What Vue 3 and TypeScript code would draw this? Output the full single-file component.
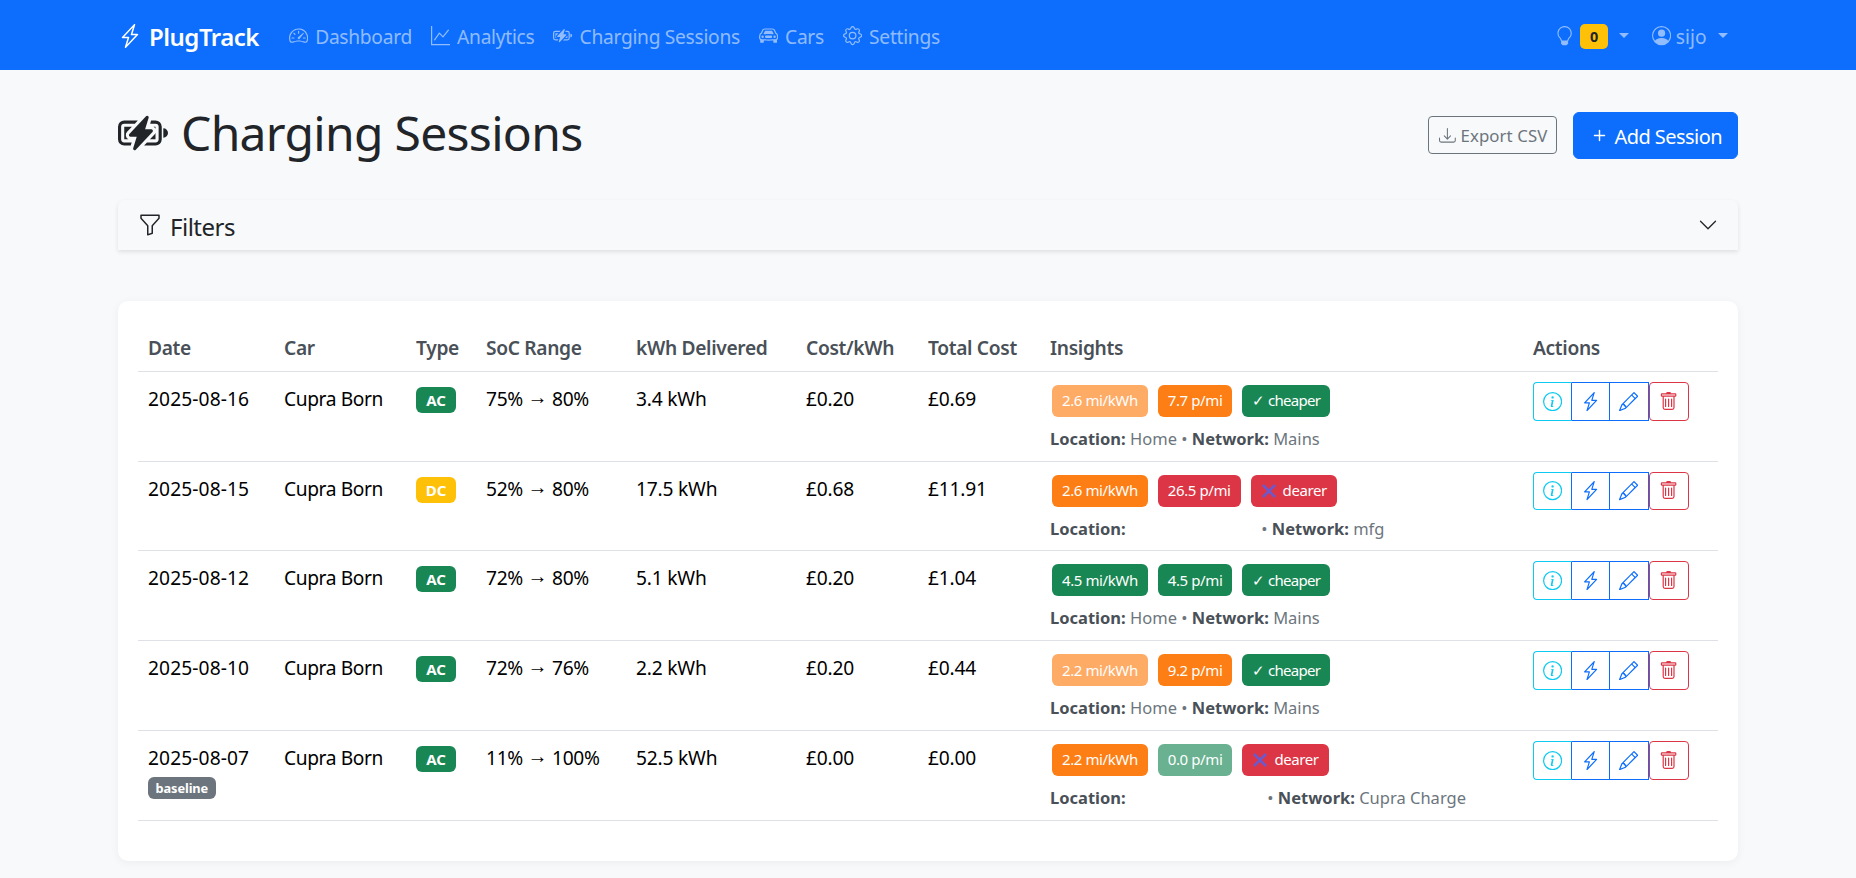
<script setup lang="ts">
interface Row {
  date: string; baseline?: boolean; type: string; socFrom: string; socTo: string; kwh: string; cost: string; total: string;
  eff: string; effClass: string; ppm: string; ppmClass: string; cheaper: boolean; location: string; network: string;
}
const rows: Row[] = [
  { date: '2025-08-16', type: 'AC', socFrom: '75%', socTo: '80%', kwh: '3.4 kWh', cost: '£0.20', total: '£0.69', eff: '2.6 mi/kWh', effClass: 'light-orange', ppm: '7.7 p/mi', ppmClass: 'orange', cheaper: true, location: 'Home', network: 'Mains' },
  { date: '2025-08-15', type: 'DC', socFrom: '52%', socTo: '80%', kwh: '17.5 kWh', cost: '£0.68', total: '£11.91', eff: '2.6 mi/kWh', effClass: 'orange', ppm: '26.5 p/mi', ppmClass: 'red', cheaper: false, location: '', network: 'mfg' },
  { date: '2025-08-12', type: 'AC', socFrom: '72%', socTo: '80%', kwh: '5.1 kWh', cost: '£0.20', total: '£1.04', eff: '4.5 mi/kWh', effClass: 'green', ppm: '4.5 p/mi', ppmClass: 'green', cheaper: true, location: 'Home', network: 'Mains' },
  { date: '2025-08-10', type: 'AC', socFrom: '72%', socTo: '76%', kwh: '2.2 kWh', cost: '£0.20', total: '£0.44', eff: '2.2 mi/kWh', effClass: 'light-orange', ppm: '9.2 p/mi', ppmClass: 'orange', cheaper: true, location: 'Home', network: 'Mains' },
  { date: '2025-08-07', baseline: true, type: 'AC', socFrom: '11%', socTo: '100%', kwh: '52.5 kWh', cost: '£0.00', total: '£0.00', eff: '2.2 mi/kWh', effClass: 'orange', ppm: '0.0 p/mi', ppmClass: 'light-green', cheaper: false, location: '', network: 'Cupra Charge' },
]
</script>

<template>
  <div class="page">
    <nav class="navbar">
      <div class="nav-inner">
        <a class="brand">
          <svg class="bi brand-icon" viewBox="0 0 16 16"><path d="M11.251.068a.5.5 0 0 1 .227.58L9.677 6.5H13a.5.5 0 0 1 .364.843l-8 8.5a.5.5 0 0 1-.842-.49L6.323 9.5H3a.5.5 0 0 1-.364-.843l8-8.5a.5.5 0 0 1 .615-.09zM4.157 8.5H7a.5.5 0 0 1 .478.647L6.11 13.59l5.732-6.09H9a.5.5 0 0 1-.478-.647L9.89 2.41 4.157 8.5z"/></svg>
          <span>PlugTrack</span>
        </a>
        <ul class="nav-links">
          <li><svg class="bi" viewBox="0 0 16 16"><path d="M8 4a.5.5 0 0 1 .5.5V6a.5.5 0 0 1-1 0V4.5A.5.5 0 0 1 8 4zM3.732 5.732a.5.5 0 0 1 .707 0l.915.914a.5.5 0 1 1-.708.708l-.914-.915a.5.5 0 0 1 0-.707zM2 10a.5.5 0 0 1 .5-.5h1.586a.5.5 0 0 1 0 1H2.5A.5.5 0 0 1 2 10zm9.5 0a.5.5 0 0 1 .5-.5h1.5a.5.5 0 0 1 0 1H12a.5.5 0 0 1-.5-.5zm.754-4.246a.389.389 0 0 0-.527-.02L7.547 9.31a.91.91 0 1 0 1.302 1.258l3.434-4.297a.389.389 0 0 0-.029-.518z"/><path fill-rule="evenodd" d="M0 10a8 8 0 1 1 15.547 2.661c-.442 1.253-1.845 1.602-2.932 1.25C11.309 13.488 9.475 13 8 13c-1.474 0-3.31.488-4.615.911-1.087.352-2.49.003-2.932-1.25A7.988 7.988 0 0 1 0 10zm8-7a7 7 0 0 0-6.603 9.329c.203.575.923.876 1.68.63C4.397 12.533 6.358 12 8 12s3.604.532 4.923.96c.757.245 1.477-.056 1.68-.631A7 7 0 0 0 8 3z"/></svg><span>Dashboard</span></li>
          <li><svg class="bi" viewBox="0 0 16 16"><path fill-rule="evenodd" d="M0 0h1v15h15v1H0V0Zm14.817 3.113a.5.5 0 0 1 .07.704l-4.5 5.5a.5.5 0 0 1-.74.037L7.06 6.767l-3.656 5.027a.5.5 0 0 1-.808-.588l4-5.5a.5.5 0 0 1 .758-.06l2.609 2.61 4.15-5.073a.5.5 0 0 1 .704-.07Z"/></svg><span>Analytics</span></li>
          <li><svg class="bi" viewBox="0 0 16 16"><path d="M9.585 2.568a.5.5 0 0 1 .226.58L8.677 6.832h1.99a.5.5 0 0 1 .364.843l-5.334 5.667a.5.5 0 0 1-.842-.49L5.99 9.167H4a.5.5 0 0 1-.364-.843l5.333-5.667a.5.5 0 0 1 .616-.09z"/><path d="M2 4h4.332l-.94 1H2a1 1 0 0 0-1 1v4a1 1 0 0 0 1 1h2.38l-.308 1H2a2 2 0 0 1-2-2V6a2 2 0 0 1 2-2z"/><path d="M2 6h2.45L2.908 7.639A1.5 1.5 0 0 0 3.313 10H2V6zm8.595-2-.308 1H12a1 1 0 0 1 1 1v4a1 1 0 0 1-1 1H9.276l-.942 1H12a2 2 0 0 0 2-2V6a2 2 0 0 0-2-2h-1.405z"/><path d="M12 10h-1.783l1.542-1.639c.097-.103.178-.218.241-.34V10zm0-3.354V6h-.646a1.5 1.5 0 0 1 .646.646zM16 8a1.5 1.5 0 0 1-1.5 1.5v-3A1.5 1.5 0 0 1 16 8z"/></svg><span>Charging Sessions</span></li>
          <li><svg class="bi" viewBox="0 0 16 16"><path d="M4 9a1 1 0 1 1-2 0 1 1 0 0 1 2 0Zm10 0a1 1 0 1 1-2 0 1 1 0 0 1 2 0ZM6 8a1 1 0 0 0 0 2h4a1 1 0 1 0 0-2H6ZM4.862 4.276 3.906 6.19a.51.51 0 0 0 .497.731c.91-.073 2.35-.17 3.597-.17 1.247 0 2.688.097 3.597.17a.51.51 0 0 0 .497-.731l-.956-1.913A.5.5 0 0 0 10.691 4H5.309a.5.5 0 0 0-.447.276Z"/><path fill-rule="evenodd" d="M2.52 3.515A2.5 2.5 0 0 1 4.82 2h6.362c1 0 1.904.596 2.298 1.515l.792 1.848c.075.175.21.319.38.404.5.25.855.715.965 1.262l.335 1.679c.033.161.049.325.049.49v.413c0 .814-.39 1.543-1 1.997V13.5a.5.5 0 0 1-.5.5h-2a.5.5 0 0 1-.5-.5v-1.338c-1.292.048-2.745.088-4 .088s-2.708-.04-4-.088V13.5a.5.5 0 0 1-.5.5h-2a.5.5 0 0 1-.5-.5v-1.892c-.61-.454-1-1.183-1-1.997v-.413a2.5 2.5 0 0 1 .049-.49l.335-1.68c.11-.546.465-1.012.964-1.261a.807.807 0 0 0 .381-.404l.792-1.848ZM4.82 3a1.5 1.5 0 0 0-1.379.91l-.792 1.847a1.8 1.8 0 0 1-.853.904.807.807 0 0 0-.43.564L1.03 8.904a1.5 1.5 0 0 0-.03.294v.413c0 .796.62 1.448 1.408 1.484 1.555.07 3.786.155 5.592.155 1.806 0 4.037-.084 5.592-.155A1.479 1.479 0 0 0 15 9.611v-.413c0-.099-.01-.197-.03-.294l-.335-1.68a.807.807 0 0 0-.43-.563 1.807 1.807 0 0 1-.853-.904l-.792-1.848A1.5 1.5 0 0 0 11.18 3H4.82Z"/></svg><span>Cars</span></li>
          <li><svg class="bi" viewBox="0 0 16 16"><path d="M8 4.754a3.246 3.246 0 1 0 0 6.492 3.246 3.246 0 0 0 0-6.492zM5.754 8a2.246 2.246 0 1 1 4.492 0 2.246 2.246 0 0 1-4.492 0z"/><path d="M9.796 1.343c-.527-1.79-3.065-1.79-3.592 0l-.094.319a.873.873 0 0 1-1.255.52l-.292-.16c-1.64-.892-3.433.902-2.54 2.541l.159.292a.873.873 0 0 1-.52 1.255l-.319.094c-1.79.527-1.79 3.065 0 3.592l.319.094a.873.873 0 0 1 .52 1.255l-.16.292c-.892 1.64.901 3.434 2.541 2.54l.292-.159a.873.873 0 0 1 1.255.52l.094.319c.527 1.79 3.065 1.79 3.592 0l.094-.319a.873.873 0 0 1 1.255-.52l.292.16c1.64.893 3.434-.902 2.54-2.541l-.159-.292a.873.873 0 0 1 .52-1.255l.319-.094c1.79-.527 1.79-3.065 0-3.592l-.319-.094a.873.873 0 0 1-.52-1.255l.16-.292c.893-1.64-.902-3.433-2.541-2.54l-.292.159a.873.873 0 0 1-1.255-.52l-.094-.319zm-2.633.283c.246-.835 1.428-.835 1.674 0l.094.319a1.873 1.873 0 0 0 2.693 1.115l.291-.16c.764-.415 1.6.42 1.184 1.185l-.159.292a1.873 1.873 0 0 0 1.116 2.692l.318.094c.835.246.835 1.428 0 1.674l-.319.094a1.873 1.873 0 0 0-1.115 2.693l.16.291c.415.764-.42 1.6-1.185 1.184l-.291-.159a1.873 1.873 0 0 0-2.693 1.116l-.094.318c-.246.835-1.428.835-1.674 0l-.094-.319a1.873 1.873 0 0 0-2.692-1.115l-.292.16c-.764.415-1.6-.42-1.184-1.185l.159-.291A1.873 1.873 0 0 0 1.945 8.93l-.319-.094c-.835-.246-.835-1.428 0-1.674l.319-.094A1.873 1.873 0 0 0 3.06 4.377l-.16-.292c-.415-.764.42-1.6 1.185-1.184l.292.159a1.873 1.873 0 0 0 2.692-1.115l.094-.319z"/></svg><span>Settings</span></li>
        </ul>
        <div class="nav-right">
          <div class="nav-drop">
            <svg class="bi" viewBox="0 0 16 16"><path d="M2 6a6 6 0 1 1 10.174 4.31c-.203.196-.359.4-.453.619l-.762 1.769A.5.5 0 0 1 10.5 13a.5.5 0 0 1 0 1 .5.5 0 0 1 0 1l-.224.447a1 1 0 0 1-.894.553H6.618a1 1 0 0 1-.894-.553L5.5 15a.5.5 0 0 1 0-1 .5.5 0 0 1 0-1 .5.5 0 0 1-.46-.302l-.761-1.77a1.964 1.964 0 0 0-.453-.618A5.984 5.984 0 0 1 2 6zm6-5a5 5 0 0 0-3.479 8.592c.263.254.514.564.676.941L5.83 12h4.342l.632-1.467c.162-.377.413-.687.676-.941A5 5 0 0 0 8 1z"/></svg>
            <span class="count">0</span>
            <i class="caret"></i>
          </div>
          <div class="nav-drop user">
            <svg class="bi" viewBox="0 0 16 16"><path d="M11 6a3 3 0 1 1-6 0 3 3 0 0 1 6 0z"/><path fill-rule="evenodd" d="M0 8a8 8 0 1 1 16 0A8 8 0 0 1 0 8zm8-7a7 7 0 0 0-5.468 11.37C3.242 11.226 4.805 10 8 10s4.757 1.225 5.468 2.37A7 7 0 0 0 8 1z"/></svg>
            <span>sijo</span>
            <i class="caret"></i>
          </div>
        </div>
      </div>
    </nav>

    <main class="container">
      <header class="title-row">
        <h1>
          <svg class="bi" viewBox="0 0 16 16"><path d="M9.585 2.568a.5.5 0 0 1 .226.58L8.677 6.832h1.99a.5.5 0 0 1 .364.843l-5.334 5.667a.5.5 0 0 1-.842-.49L5.99 9.167H4a.5.5 0 0 1-.364-.843l5.333-5.667a.5.5 0 0 1 .616-.09z"/><path d="M2 4h4.332l-.94 1H2a1 1 0 0 0-1 1v4a1 1 0 0 0 1 1h2.38l-.308 1H2a2 2 0 0 1-2-2V6a2 2 0 0 1 2-2z"/><path d="M2 6h2.45L2.908 7.639A1.5 1.5 0 0 0 3.313 10H2V6zm8.595-2-.308 1H12a1 1 0 0 1 1 1v4a1 1 0 0 1-1 1H9.276l-.942 1H12a2 2 0 0 0 2-2V6a2 2 0 0 0-2-2h-1.405z"/><path d="M12 10h-1.783l1.542-1.639c.097-.103.178-.218.241-.34V10zm0-3.354V6h-.646a1.5 1.5 0 0 1 .646.646zM16 8a1.5 1.5 0 0 1-1.5 1.5v-3A1.5 1.5 0 0 1 16 8z"/></svg>
          <span>Charging Sessions</span>
        </h1>
        <div class="title-actions">
          <button class="btn-export">
            <svg class="bi" viewBox="0 0 16 16"><path d="M.5 9.9a.5.5 0 0 1 .5.5v2.5a1 1 0 0 0 1 1h12a1 1 0 0 0 1-1v-2.5a.5.5 0 0 1 1 0v2.5a2 2 0 0 1-2 2H2a2 2 0 0 1-2-2v-2.5a.5.5 0 0 1 .5-.5z"/><path d="M7.646 11.854a.5.5 0 0 0 .708 0l3-3a.5.5 0 0 0-.708-.708L8.5 10.293V1.5a.5.5 0 0 0-1 0v8.793L5.354 8.146a.5.5 0 1 0-.708.708l3 3z"/></svg>
            <span>Export CSV</span>
          </button>
          <button class="btn-add">
            <svg class="bi" viewBox="0 0 16 16"><path d="M8 4a.5.5 0 0 1 .5.5v3h3a.5.5 0 0 1 0 1h-3v3a.5.5 0 0 1-1 0v-3h-3a.5.5 0 0 1 0-1h3v-3A.5.5 0 0 1 8 4z"/></svg>
            <span>Add Session</span>
          </button>
        </div>
      </header>

      <section class="filters">
        <svg class="bi" viewBox="0 0 16 16"><path d="M1.5 1.5A.5.5 0 0 1 2 1h12a.5.5 0 0 1 .5.5v2a.5.5 0 0 1-.128.334L10 8.692V13.5a.5.5 0 0 1-.342.474l-3 1A.5.5 0 0 1 6 14.5V8.692L1.628 3.834A.5.5 0 0 1 1.5 3.5v-2zm1 .5v1.308l4.372 4.858A.5.5 0 0 1 7 8.5v5.306l2-.666V8.5a.5.5 0 0 1 .128-.334L13.5 3.308V2h-11z"/></svg>
        <span class="filters-label">Filters</span>
        <svg class="bi chevron" viewBox="0 0 16 16"><path fill-rule="evenodd" d="M1.646 4.646a.5.5 0 0 1 .708 0L8 10.293l5.646-5.647a.5.5 0 0 1 .708.708l-6 6a.5.5 0 0 1-.708 0l-6-6a.5.5 0 0 1 0-.708z"/></svg>
      </section>

      <section class="card">
        <table>
          <thead>
            <tr>
              <th>Date</th><th>Car</th><th>Type</th><th>SoC Range</th><th>kWh Delivered</th><th>Cost/kWh</th><th>Total Cost</th><th>Insights</th><th>Actions</th>
            </tr>
          </thead>
          <tbody>
            <tr v-for="row in rows" :key="row.date">
              <td class="date">
                <div>{{ row.date }}</div>
                <span v-if="row.baseline" class="baseline">baseline</span>
              </td>
              <td class="car">Cupra Born</td>
              <td class="type-cell"><span class="type" :class="row.type === 'AC' ? 'ac' : 'dc'">{{ row.type }}</span></td>
              <td class="soc">{{ row.socFrom }} <span class="arrow">→</span> {{ row.socTo }}</td>
              <td>{{ row.kwh }}</td>
              <td>{{ row.cost }}</td>
              <td>{{ row.total }}</td>
              <td class="insights">
                <div class="chips">
                  <span class="chip" :class="row.effClass">{{ row.eff }}</span>
                  <span class="chip" :class="row.ppmClass">{{ row.ppm }}</span>
                  <span v-if="row.cheaper" class="chip green cheap">✓ cheaper</span>
                  <span v-else class="chip red"><svg class="cross" viewBox="0 0 16 16"><path d="M2 2 14 14M14 2 2 14"/></svg> dearer</span>
                </div>
                <div class="meta">
                  <strong>Location:</strong> <span class="loc" :class="{ blank: !row.location, wide: row.network === 'Cupra Charge' }">{{ row.location }}</span> • <strong>Network:</strong> {{ row.network }}
                </div>
              </td>
              <td class="actions-cell">
                <div class="group">
                  <button class="act info"><svg class="bi" viewBox="0 0 16 16"><path d="M8 15A7 7 0 1 1 8 1a7 7 0 0 1 0 14zm0 1A8 8 0 1 0 8 0a8 8 0 0 0 0 16z"/><path d="m8.93 6.588-2.29.287-.082.38.45.083c.294.07.352.176.288.469l-.738 3.468c-.194.897.105 1.319.808 1.319.545 0 1.178-.252 1.465-.598l.088-.416c-.2.176-.492.246-.686.246-.275 0-.375-.193-.304-.533L8.93 6.588zM9 4.5a1 1 0 1 1-2 0 1 1 0 0 1 2 0z"/></svg></button>
                  <button class="act primary"><svg class="bi" viewBox="0 0 16 16"><path d="M11.251.068a.5.5 0 0 1 .227.58L9.677 6.5H13a.5.5 0 0 1 .364.843l-8 8.5a.5.5 0 0 1-.842-.49L6.323 9.5H3a.5.5 0 0 1-.364-.843l8-8.5a.5.5 0 0 1 .615-.09zM4.157 8.5H7a.5.5 0 0 1 .478.647L6.11 13.59l5.732-6.09H9a.5.5 0 0 1-.478-.647L9.89 2.41 4.157 8.5z"/></svg></button>
                  <button class="act primary"><svg class="bi" viewBox="0 0 16 16"><path d="M12.146.146a.5.5 0 0 1 .708 0l3 3a.5.5 0 0 1 0 .708l-10 10a.5.5 0 0 1-.168.11l-5 2a.5.5 0 0 1-.65-.65l2-5a.5.5 0 0 1 .11-.168l10-10zM11.207 2.5 13.5 4.793 14.793 3.5 12.5 1.207 11.207 2.5zm1.586 3L10.5 3.207 4 9.707V10h.5a.5.5 0 0 1 .5.5v.5h.5a.5.5 0 0 1 .5.5v.5h.293l6.5-6.5zm-9.761 5.175-.106.106-1.528 3.821 3.821-1.528.106-.106A.5.5 0 0 1 5 12.5V12h-.5a.5.5 0 0 1-.5-.5V11h-.5a.5.5 0 0 1-.468-.325z"/></svg></button>
                  <button class="act danger"><svg class="bi" viewBox="0 0 16 16"><path d="M5.5 5.5A.5.5 0 0 1 6 6v6a.5.5 0 0 1-1 0V6a.5.5 0 0 1 .5-.5Zm2.5 0a.5.5 0 0 1 .5.5v6a.5.5 0 0 1-1 0V6a.5.5 0 0 1 .5-.5Zm3 .5a.5.5 0 0 0-1 0v6a.5.5 0 0 0 1 0V6Z"/><path d="M14.5 3a1 1 0 0 1-1 1H13v9a2 2 0 0 1-2 2H5a2 2 0 0 1-2-2V4h-.5a1 1 0 0 1-1-1V2a1 1 0 0 1 1-1H6a1 1 0 0 1 1-1h2a1 1 0 0 1 1 1h3.5a1 1 0 0 1 1 1v1ZM4.118 4 4 4.059V13a1 1 0 0 0 1 1h6a1 1 0 0 0 1-1V4.059L11.882 4H4.118ZM2.5 3h11V2h-11v1Z"/></svg></button>
                </div>
              </td>
            </tr>
          </tbody>
        </table>
      </section>
    </main>
  </div>
</template>

<style>
html, body { margin: 0; background: #f8f9fa; }
</style>

<style scoped>
.page {
  min-height: 878px;
  background: #f8f9fa;
  color: #212529;
  font-family: "Noto Sans", sans-serif;
  font-size: 19.2px;
}
.bi { width: 1em; height: 1em; fill: currentColor; flex: none; display: block; }

.navbar { height: 70px; background: #0d6efd; display: flex; align-items: center; }
.nav-inner { width: 1620px; margin: 0 auto; display: flex; align-items: center; padding-top: 2px; }
.brand { display: flex; align-items: center; gap: 7px; color: #fff; font-size: 24px; font-weight: 600; letter-spacing: -0.5px; margin-right: 30px; }
.brand-icon { width: 24px; height: 24px; }
.nav-links { display: flex; list-style: none; margin: 0; padding: 0; gap: 19px; color: rgba(255,255,255,.55); letter-spacing: -0.29px; }
.nav-links li { display: flex; align-items: center; gap: 7px; }
.nav-right { margin-left: auto; padding-right: 10px; display: flex; align-items: center; gap: 22.5px; color: rgba(255,255,255,.55); }
.nav-drop { display: flex; align-items: center; gap: 6px; }
.user { gap: 5px; }
.user .caret { margin-left: 6.5px; }
.count { background: #ffc107; color: #212529; font-size: 14.4px; font-weight: 700; border-radius: 5px; width: 28px; text-align: center; height: 25px; line-height: 25px; }
.caret { width: 0; height: 0; border-top: 5.76px solid currentColor; border-left: 5.76px solid transparent; border-right: 5.76px solid transparent; margin-left: 5px; margin-bottom: 2px; }

.container { width: 1620px; margin: 0 auto; }
.title-row { display: flex; align-items: center; justify-content: space-between; margin: 36px 0; height: 58px; }
h1 { margin: 0 0 5px; font-size: 48px; font-weight: 400; display: flex; align-items: center; gap: 13px; letter-spacing: -0.7px; }
h1 .bi { width: 50px; height: 50px; }
.title-actions { display: flex; align-items: center; gap: 16px; }
button { font-family: inherit; cursor: pointer; }
.btn-export { display: flex; align-items: center; gap: 5px; height: 38px; padding: 0 9px 0 9.5px; background: transparent; border: 1px solid #6c757d; border-radius: 4px; color: #6c757d; font-size: 16.8px; letter-spacing: 0.1px; }
.btn-add { display: flex; align-items: center; gap: 3px; height: 47px; padding: 0 15px 0 14px; background: #0d6efd; border: 1px solid #0d6efd; border-radius: 6px; color: #fff; font-size: 20px; letter-spacing: -0.55px; }
.btn-add .bi { width: 23px; height: 23px; }
.btn-add span { padding-top: 2px; }

.filters { height: 50px; box-sizing: border-box; display: flex; align-items: center; padding: 0 20px; background: #f8f9fa; border-radius: 6px 6px 0 0; box-shadow: 0 2px 4px rgba(0,0,0,.1); font-size: 24px; }
.filters-label { margin-left: 8px; padding-top: 2px; letter-spacing: -0.5px; }
.filters .bi { width: 24px; height: 24px; }
.filters .chevron { margin-left: auto; width: 20px; height: 20px; }

.card { margin-top: 51px; background: #fff; border-radius: 10px; padding: 20px; box-shadow: 0 2px 10px rgba(0,0,0,.05); height: 560px; box-sizing: border-box; }
table { width: 100%; border-collapse: collapse; table-layout: fixed; letter-spacing: -0.2px; color: #000; }
th { text-align: left; font-weight: 600; color: #495057; padding: 4px 10px 0; height: 50.4px; box-sizing: border-box; border-bottom: 1px solid #dee2e6; letter-spacing: -0.33px; }
td { vertical-align: top; padding: 13px 10px 0; height: 89.75px; box-sizing: border-box; border-bottom: 1px solid #dee2e6; line-height: 27px; }
th:nth-child(1) { width: 136px; }
th:nth-child(2) { width: 132px; }
th:nth-child(3) { width: 70px; }
th:nth-child(4) { width: 150px; }
th:nth-child(5) { width: 170px; }
th:nth-child(6) { width: 122px; }
th:nth-child(7) { width: 122px; }
th:nth-child(8) { width: 483px; }
.date { letter-spacing: 0.1px; }
.car { letter-spacing: -0.4px; }
.type-cell { padding-top: 15px; }
.type { display: block; font-size: 15px; font-weight: 700; color: #fff; border-radius: 6px; width: 40px; height: 26px; line-height: 26px; text-align: center; letter-spacing: 0; }
.type.ac { background: #198754; }
.type.dc { background: #ffc107; }
.soc { letter-spacing: -0.35px; }
.arrow { font-family: "Liberation Sans", sans-serif; font-size: 20px; letter-spacing: 0; line-height: 1; vertical-align: 2px; }
.baseline { display: block; width: fit-content; margin-top: 6px; background: #6c757d; color: #fff; font-size: 12.8px; font-weight: 700; border-radius: 6px; height: 22px; line-height: 22px; padding: 0 7.5px; letter-spacing: -0.1px; }
.chips { display: flex; gap: 10px; padding-left: 2px; }
.chip { height: 32px; padding: 0 10px; border-radius: 6px; color: #fff; font-size: 15px; display: inline-flex; align-items: center; gap: 6px; letter-spacing: -0.4px; }
.chip.cheap { letter-spacing: -0.7px; }
.chip.orange { background: #fd7e14; }
.chip.light-orange { background: rgba(253,126,20,.65); }
.chip.green { background: #198754; }
.chip.light-green { background: rgba(25,135,84,.65); }
.chip.red { background: #dc3545; }
.cross { width: 16px; height: 16px; stroke: #6a5acd; stroke-width: 2.6; fill: none; flex: none; }
.meta { margin-top: 9px; font-size: 16.5px; line-height: 26px; color: #6c757d; white-space: nowrap; letter-spacing: 0; }
.meta strong { color: #495057; font-weight: 700; }
.loc.blank { display: inline-block; width: 127px; }
.loc.blank.wide { width: 133px; }
.group { display: flex; }
.actions-cell { padding-top: 10px; }
.act { width: 38.5px; height: 38.7px; padding: 0; display: flex; align-items: center; justify-content: center; background: transparent; border: 1px solid; font-size: 19.2px; box-sizing: border-box; }
.act.info { color: #0dcaf0; border-color: #0dcaf0; border-right-color: #0d6efd; border-radius: 4px 0 0 4px; }
.act.primary { color: #0d6efd; border-color: #0d6efd; border-left: 0; }
.act.danger { color: #dc3545; border-color: #dc3545; border-radius: 4px; margin-left: 0.7px; width: 39.5px; }
</style>
